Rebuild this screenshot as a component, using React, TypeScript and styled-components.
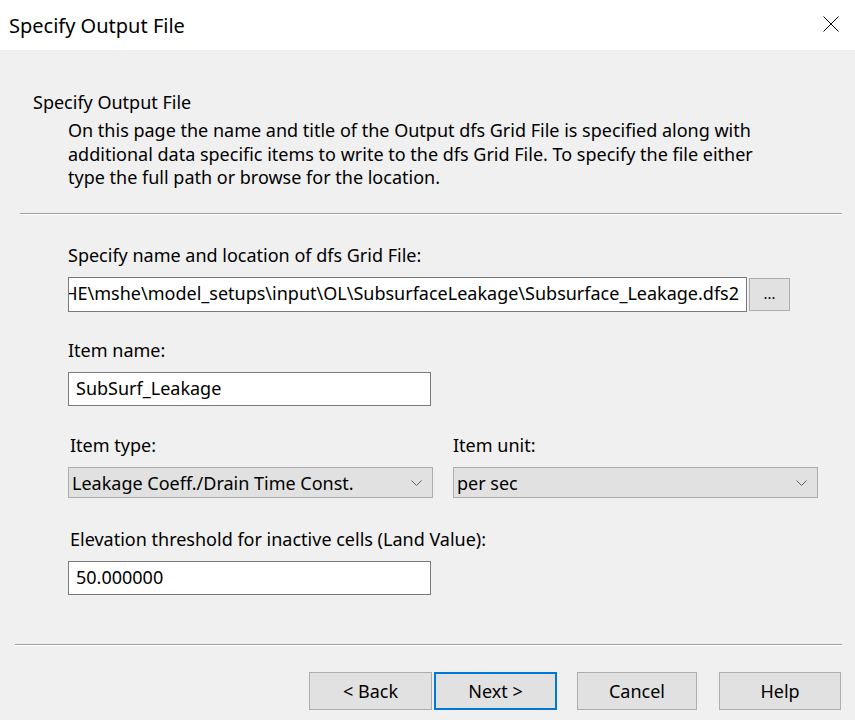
import React from "react";
import styled, { createGlobalStyle } from "styled-components";

const GlobalStyle = createGlobalStyle`
  html, body {
    margin: 0;
    padding: 0;
    background: #f0f0f0;
  }
  body {
    font-family: "Segoe UI", "Noto Sans", sans-serif;
    font-size: 18px;
    color: #000;
  }
`;

const Window = styled.div`
  width: 855px;
  height: 720px;
  background: #f0f0f0;
  display: flex;
  flex-direction: column;
  overflow: hidden;
`;

const TitleBar = styled.div`
  height: 50px;
  flex: none;
  background: #fff;
  display: flex;
  align-items: center;
  justify-content: space-between;
  padding-left: 9px;
  padding-right: 14px;
  font-size: 20px;
`;

const CloseButton = styled.div`
  width: 20px;
  height: 20px;
  display: flex;
  align-items: center;
  justify-content: center;
  margin-top: -2px;
`;

const Intro = styled.div`
  padding: 40px 0 0 33px;
`;

const Heading = styled.div`
  line-height: 24px;
  height: 24px;
`;

const Description = styled.p`
  margin: 5px 0 0 35px;
  line-height: 23.5px;
  white-space: nowrap;
`;

const Separator = styled.div<{ $left: number; $top: number }>`
  margin: ${(p) => p.$top}px 13px 0 ${(p) => p.$left}px;
  height: 1px;
  background: #a0a0a0;
  border-bottom: 1px solid #fff;
`;

const Form = styled.div`
  padding: 28px 0 0 68px;
`;

const Field = styled.div<{ $gap: number }>`
  margin-top: ${(p) => p.$gap}px;
  display: flex;
  flex-direction: column;
  gap: 10px;
`;

const Label = styled.div<{ $indent?: number }>`
  line-height: 24px;
  padding-left: ${(p) => p.$indent ?? 0}px;
`;

const PathRow = styled.div`
  display: flex;
  align-items: center;
  gap: 2px;
`;

const TextBox = styled.div<{ $width: number; $height: number; $alignEnd?: boolean }>`
  width: ${(p) => p.$width}px;
  height: ${(p) => p.$height}px;
  box-sizing: border-box;
  background: #fff;
  border: 1px solid #7a7a7a;
  display: flex;
  align-items: center;
  justify-content: ${(p) => (p.$alignEnd ? "flex-end" : "flex-start")};
  padding: 0 7px 2px 7px;
  overflow: hidden;
  white-space: nowrap;
`;

const Browse = styled.div`
  width: 41px;
  height: 33px;
  box-sizing: border-box;
  background: #e1e1e1;
  border: 1px solid #adadad;
  display: flex;
  align-items: center;
  justify-content: center;
  font-size: 15px;
  padding-bottom: 2px;
`;

const Columns = styled.div`
  display: flex;
  gap: 20px;
`;

const Column = styled.div<{ $width: number }>`
  width: ${(p) => p.$width}px;
  display: flex;
  flex-direction: column;
  gap: 10px;
`;

const Select = styled.div`
  height: 31px;
  box-sizing: border-box;
  background: #e1e1e1;
  border: 1px solid #adadad;
  display: flex;
  align-items: center;
  justify-content: space-between;
  padding: 1px 10px 0 3px;
  white-space: nowrap;
`;

const Footer = styled.div`
  margin-top: auto;
  padding-bottom: 10px;
`;

const ButtonRow = styled.div`
  display: flex;
  justify-content: flex-end;
  padding: 26px 14px 0 0;
`;

const Button = styled.div<{ $primary?: boolean; $space?: number; $width: number }>`
  width: ${(p) => p.$width}px;
  height: 38px;
  box-sizing: border-box;
  margin-left: ${(p) => p.$space ?? 0}px;
  background: #e1e1e1;
  border: ${(p) => (p.$primary ? "2px solid #0078d7" : "1px solid #adadad")};
  display: flex;
  align-items: center;
  justify-content: center;
`;

const Chevron = () => (
  <svg width="11" height="6" viewBox="0 0 11 6">
    <path d="M0.5 0.5 L5.5 5.5 L10.5 0.5" fill="none" stroke="#606060" strokeWidth="1" />
  </svg>
);

const App: React.FC = () => {
  return (
    <>
      <GlobalStyle />
      <Window>
        <TitleBar>
          <span>Specify Output File</span>
          <CloseButton>
            <svg width="16" height="16" viewBox="0 0 16 16">
              <path d="M0.5 0.5 L15.5 15.5 M15.5 0.5 L0.5 15.5" stroke="#000" strokeWidth="1" />
            </svg>
          </CloseButton>
        </TitleBar>

        <Intro>
          <Heading>Specify Output File</Heading>
          <Description>
            On this page the name and title of the Output dfs Grid File is specified along with
            <br />
            additional data specific items to write to the dfs Grid File. To specify the file either
            <br />
            type the full path or browse for the location.
          </Description>
        </Intro>

        <Separator $left={20} $top={23} />

        <Form>
          <Field $gap={0}>
            <Label>Specify name and location of dfs Grid File:</Label>
            <PathRow>
              <TextBox $width={679} $height={35} $alignEnd>
                C:\Program Files\DHI\MIKE SHE\mshe\model_setups\input\OL\SubsurfaceLeakage\Subsurface_Leakage.dfs2
              </TextBox>
              <Browse>...</Browse>
            </PathRow>
          </Field>

          <Field $gap={26}>
            <Label>Item name:</Label>
            <TextBox $width={363} $height={34}>SubSurf_Leakage</TextBox>
          </Field>

          <Field $gap={27}>
            <Columns>
              <Column $width={365}>
                <Label $indent={2}>Item type:</Label>
                <Select>
                  <span>Leakage Coeff./Drain Time Const.</span>
                  <Chevron />
                </Select>
              </Column>
              <Column $width={365}>
                <Label>Item unit:</Label>
                <Select>
                  <span>per sec</span>
                  <Chevron />
                </Select>
              </Column>
            </Columns>
          </Field>

          <Field $gap={29}>
            <Label $indent={2}>Elevation threshold for inactive cells (Land Value):</Label>
            <TextBox $width={363} $height={34}>50.000000</TextBox>
          </Field>
        </Form>

        <Footer>
          <Separator $left={15} $top={0} />
          <ButtonRow>
            <Button $width={123}>&lt; Back</Button>
            <Button $width={123} $primary $space={2}>Next &gt;</Button>
            <Button $width={120} $space={20}>Cancel</Button>
            <Button $width={122} $space={22}>Help</Button>
          </ButtonRow>
        </Footer>
      </Window>
    </>
  );
};

export default App;
